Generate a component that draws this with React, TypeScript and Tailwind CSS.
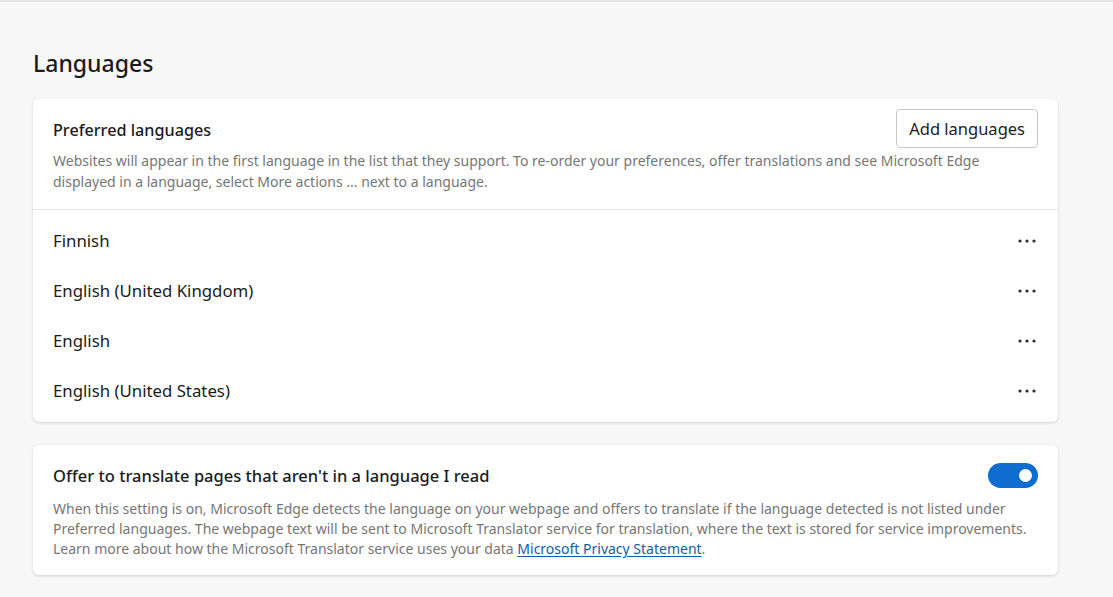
import React from "react";

const font = { fontFamily: '"Segoe UI", "Noto Sans", "Open Sans", sans-serif' };

function Dots() {
  return (
    <svg width="18" height="4" viewBox="0 0 18 4" className="block">
      <circle cx="2" cy="2" r="1.6" fill="#2b2b2b" />
      <circle cx="9" cy="2" r="1.6" fill="#2b2b2b" />
      <circle cx="16" cy="2" r="1.6" fill="#2b2b2b" />
    </svg>
  );
}

export default function App() {
  const langs = ["Finnish", "English (United Kingdom)", "English", "English (United States)"];
  return (
    <div className="w-[1113px] h-[597px] bg-[#f7f7f7] border-t-2 border-[#e5e5e5] overflow-hidden text-[#1b1b1b]" style={font}>
      <div className="pl-[33px] w-[1058px]">
        <h1 className="mt-[45px] text-[23px] leading-[32px] font-medium text-[#1b1b1b]">Languages</h1>
        <div className="mt-[20px] bg-white rounded-[6px] shadow-[0_1px_3px_rgba(0,0,0,0.16)]">
          <div className="flex justify-between pl-[20px] pr-[20px] pt-[10px] pb-[17px] border-b border-[#e6e6e6]">
            <div>
              <div className="mt-[9px] text-[16.2px] leading-[24px] font-medium">Preferred languages</div>
              <div className="mt-[8px] text-[14px] leading-[21px] text-[#767676] w-[940px]">
                Websites will appear in the first language in the list that they support. To re-order your preferences, offer translations and see Microsoft Edge displayed in a language, select More actions ... next to a language.
              </div>
            </div>
            <div className="shrink-0 -ml-[120px]">
              <button className="h-[39px] px-[12px] border border-[#c8c8c8] rounded-[4px] bg-white text-[16.5px] leading-[24px] text-[#1b1b1b]">Add languages</button>
            </div>
          </div>
          <div className="py-[6px]">
            {langs.map((l) => (
              <div key={l} className="flex items-center justify-between h-[50px] pl-[20px] pr-[22px]">
                <span className="text-[16.8px]">{l}</span>
                <Dots />
              </div>
            ))}
          </div>
        </div>
        <div className="mt-[23px] bg-white rounded-[6px] shadow-[0_1px_3px_rgba(0,0,0,0.16)] pl-[20px] pr-[20px] pt-[18px] pb-[16px]">
          <div className="flex items-center justify-between">
            <span className="text-[16.5px] leading-[24px] font-medium">Offer to translate pages that aren't in a language I read</span>
            <div className="w-[50px] h-[25px] rounded-full bg-[#0f6cd1] flex items-center justify-end pr-[6px]">
              <div className="w-[13px] h-[13px] rounded-full bg-white" />
            </div>
          </div>
          <div className="mt-[11px] text-[14px] leading-[20px] text-[#767676]">
            When this setting is on, Microsoft Edge detects the language on your webpage and offers to translate if the language detected is not listed under Preferred languages. The webpage text will be sent to Microsoft Translator service for translation, where the text is stored for service improvements. Learn more about how the Microsoft Translator service uses your data{" "}
            <a className="text-[#115ea3] underline underline-offset-2">Microsoft Privacy Statement</a>.
          </div>
        </div>
      </div>
    </div>
  );
}
